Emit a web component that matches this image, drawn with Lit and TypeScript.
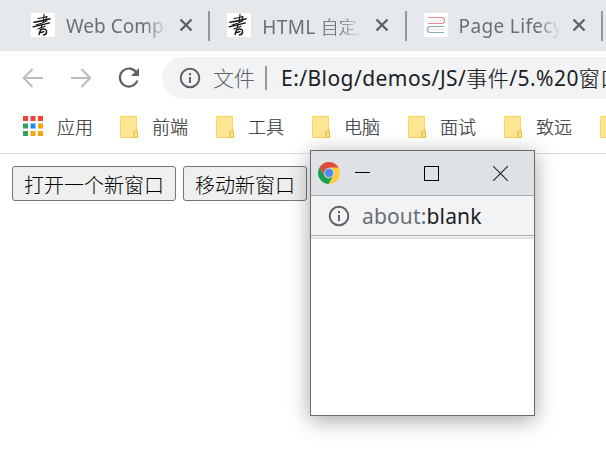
import { LitElement, html, css, svg } from "lit";
import { customElement } from "lit/decorators.js";

const calligraphy = svg`<svg width="24" height="24" viewBox="0 0 24 24"><rect width="24" height="24" fill="#fff"/><g fill="none" stroke="#151515" stroke-linecap="round" stroke-linejoin="round"><path stroke-width="1.100" d="M7 5.500Q11 4.800 16 3.500L14.500 7M5 12Q11 10.500 16 7.800M13 1.200Q13 7 10 15"/><path stroke-width="1.500" d="M3 9.300Q10 8.300 19 5.800"/><path stroke-width="1.200" d="M2 13.800Q9 12.300 18.500 9.800M7 16Q11 14.500 14 13.200"/><path stroke-width="1.400" d="M9.500 17L8 21.500M9.500 17Q14 14.800 15.500 17.500Q16 21.500 12.500 22M10 19.500L13 18.600"/></g></svg>`;
const books = svg`<svg width="24" height="24" viewBox="0 0 24 24"><rect width="24" height="24" fill="#fff"/><path d="M4 6H19V9H4ZM5 15H20V18H5Z" fill="#f4f4f4"/><g fill="none" stroke-width="1.200"><path stroke="#e58c9a" d="M4 4.500H18Q20.500 4.500 20.500 7.500Q20.500 10.500 18 10.500H4"/><path stroke="#7fb0b6" d="M20 13.500H6Q3.500 13.500 3.500 16.500Q3.500 19.500 6 19.500H20"/></g></svg>`;
const close = svg`<svg width="14" height="14" viewBox="0 0 14 14"><path d="M1.500 1.500L12.500 12.500M12.500 1.500L1.500 12.500" stroke="#5f6368" stroke-width="2.400"/></svg>`;
const info = svg`<svg width="22" height="22" viewBox="0 0 22 22"><circle cx="11" cy="11" r="9.300" fill="none" stroke="#5f6368" stroke-width="2"/><path d="M11 6V8.200M11 10V16" stroke="#5f6368" stroke-width="2"/></svg>`;
const arrow = svg`<svg width="22" height="20" viewBox="0 0 22 20"><path d="M21 10H2M10.500 1L1.700 10L10.500 19" fill="none" stroke="#babcbe" stroke-width="2"/></svg>`;
const reload = svg`<svg width="22" height="22" viewBox="0 0 22 22"><path d="M18.700 6A9 9 0 1 0 19.400 13.500" fill="none" stroke="#5f6368" stroke-width="2.200"/><path d="M21 1V9H13Z" fill="#5f6368"/></svg>`;
const folder = svg`<svg width="20" height="24" viewBox="0 0 20 24"><path d="M1.500 1.500H17.500V15.500H18.500V22.500H1.500Z" fill="#ffe694" stroke="#f9d75f"/><path d="M14.800 22.500V17.500Q14.800 15.500 16.600 15.500T18.500 17.500V22.500Z" fill="#ffe08a" stroke="#e6bd35"/></svg>`;
const dots = ["#f44336", "#f44336", "#f44336", "#34a35a", "#1e8cf5", "#f6a60a", "#34a35a", "#f6a60a", "#f6a60a"];
const apps = svg`<svg width="22" height="22" viewBox="0 0 22 22">${dots.map((c, i) => svg`<rect x=${(i % 3) * 7.500} y=${Math.floor(i / 3) * 7.500} width="5" height="5" fill=${c}/>`)}</svg>`;
const chrome = svg`<svg width="22" height="22" viewBox="0 0 22 22"><circle cx="11" cy="11" r="11" fill="#ffcd40"/><path d="M1.500 5.500A11 11 0 0 1 20.500 5.500H11L6.300 13.700Z" fill="#dd4b3e"/><path d="M1.500 5.500L6.300 13.700Q8 16.500 11 16.500L15 14L10.500 22A11 11 0 0 1 1.500 5.500Z" fill="#17a05d"/><circle cx="11" cy="11" r="5" fill="#c9d8f5"/><circle cx="11" cy="11" r="4.200" fill="#4a8af4"/></svg>`;

@customElement("app-root")
export class AppRoot extends LitElement {
  static styles = css`
    :host { display: block; position: relative; width: 606px; height: 466px; overflow: hidden; background: #fff; font-family: "Noto Sans", "Noto Sans CJK SC", sans-serif; color: #35383b; }
    * { box-sizing: border-box; }
    svg { display: block; flex: none; }
    .tabs { height: 51px; background: #e6e9ec; display: flex; padding: 0 0 0 14px; }
    .tab { flex: none; width: 196.3px; height: 51px; display: flex; align-items: center; padding: 0 0 1px 17px; position: relative; }
    .tab::after { content: ""; position: absolute; right: 0; top: 11px; width: 2px; height: 30px; background: #95989b; }
    .title { width: 101px; margin-left: 11px; padding-top: 2px; font-size: 19px; line-height: 28px; white-space: nowrap; overflow: hidden; color: #6b6f73; mask-image: linear-gradient(90deg, #000 78%, transparent 100%); }
    .title.spaced { letter-spacing: .35px; }
    .title .zh { font-size: 18px; letter-spacing: 0; }
    .tab .x { margin-left: 12px; }
    .toolbar { height: 54px; padding: 6px 0 0 22px; display: flex; }
    .nav { display: flex; align-items: center; height: 42px; width: 140px; gap: 26px; }
    .fwd { transform: scaleX(-1); }
    .omni { flex: 1; height: 42px; background: #f1f3f4; border-radius: 21px 0 0 21px; padding-left: 17px; display: flex; align-items: center; white-space: nowrap; overflow: hidden; font-size: 21px; color: #202124; }
    .file { margin: 0 0 3px 12px; color: #5f6368; font-family: "Noto Sans CJK SC", sans-serif; font-weight: 300; }
    .bar { flex: none; width: 2px; height: 24px; background: #96999c; margin: 0 13px 0 10px; }
    .url { letter-spacing: .45px; margin: 0 0 2px 1px; }
    .zh { font-family: "Noto Sans CJK SC", sans-serif; font-weight: 300; -webkit-text-stroke: .2px currentColor; }
    .marks { height: 49px; display: flex; padding: 0 0 1px 23px; align-items: center; border-bottom: 1px solid #dadce0; font-size: 18px; overflow: hidden; }
    .marks svg { margin-bottom: 3px; }
    .marks .zh { margin-bottom: 6px; }
    .mark { display: flex; align-items: center; flex: none; width: 96px; gap: 13px; }
    .mark.first { gap: 12px; }
    .content { display: flex; gap: 7px; padding: 12px; }
    .content button { appearance: none; width: 164px; height: 35px; padding: 2px 0 0; border: 1px solid #767676; border-radius: 3px; background: #efefef; color: #000; font: 300 20px/30px "Noto Sans CJK SC", sans-serif; }
    .content .move { width: 124px; }
    .popup { position: absolute; left: 310px; top: 150px; width: 225px; height: 266px; background: #fff; border: 1px solid #696b6e; box-shadow: 0 4px 20px rgba(0,0,0,.36); }
    .caption { height: 45px; background: #dee1e6; border-bottom: 1px solid #a9adb0; display: flex; align-items: center; padding-left: 7px; }
    .min { margin-left: 15px; } .max { margin-left: 54px; } .end { margin-left: 54px; }
    .address { height: 40px; background: #f1f3f4; border-bottom: 1px solid #a9adb0; display: flex; align-items: center; padding-left: 17px; font-size: 21px; color: #202124; }
    .address .text { margin-left: 12px; letter-spacing: .15px; }
    .scheme { color: #6b6f73; }
    .edge { height: 3px; background: #dee0e2; border-top: 1px solid #f6f6f6; }
  `;

  render() {
    return html`
      <header class="tabs">
        <div class="tab">${calligraphy}<span class="title">Web Compo</span><span class="x">${close}</span></div>
        <div class="tab">${calligraphy}<span class="title spaced">HTML <span class="zh">自定义</span></span><span class="x">${close}</span></div>
        <div class="tab">${books}<span class="title spaced">Page Lifecyc</span><span class="x">${close}</span></div>
      </header>
      <div class="toolbar">
        <div class="nav">${arrow}<span class="fwd">${arrow}</span>${reload}</div>
        <div class="omni">${info}<span class="file">文件</span><i class="bar"></i><span class="url">E:/Blog/demos/JS/<span class="zh">事件</span>/5.%20<span class="zh">窗口</span></span></div>
      </div>
      <nav class="marks">
        <span class="mark first">${apps}<span class="zh">应用</span></span>
        ${["前端", "工具", "电脑", "面试", "致远", ""].map((t) => html`<span class="mark">${folder}<span class="zh">${t}</span></span>`)}
      </nav>
      <main class="content"><button>打开一个新窗口</button><button class="move">移动新窗口</button></main>
      <section class="popup">
        <div class="caption">${chrome}
          <svg class="min" width="15" height="15"><path d="M0 6.500H15" stroke="#000"/></svg>
          <svg class="max" width="15" height="15"><rect x=".5" y=".5" width="14" height="14" fill="none" stroke="#000"/></svg>
          <svg class="end" width="15" height="15"><path d="M0 0L15 15M15 0L0 15" stroke="#222" stroke-width="1.100"/></svg>
        </div>
        <div class="address">${info}<span class="text"><span class="scheme">about:</span>blank</span></div>
        <div class="edge"></div>
      </section>`;
  }
}
